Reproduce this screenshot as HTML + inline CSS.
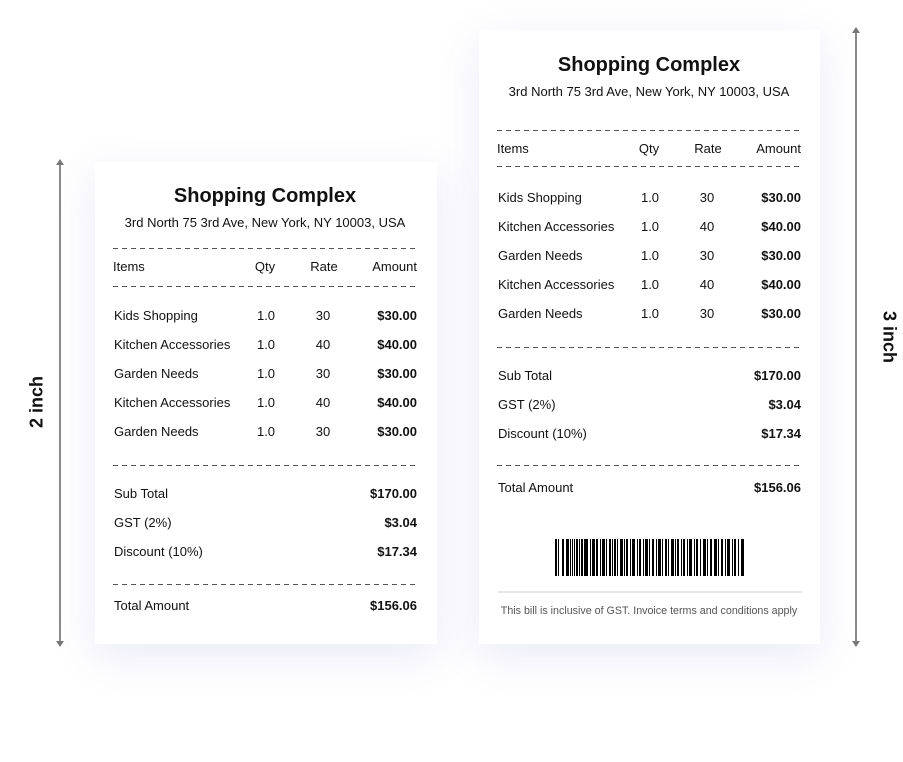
<!DOCTYPE html>
<html><head><meta charset="utf-8"><style>
*{margin:0;padding:0;box-sizing:border-box}
body{width:903px;height:762px;background:#fff;position:relative;overflow:hidden;font-family:"Liberation Sans",sans-serif;color:#111}
.card{position:absolute;background:#fff;box-shadow:0 12px 40px rgba(90,90,190,.13)}
.t{position:absolute;font-size:13px;line-height:16px;white-space:nowrap;margin-top:1px}
.c{transform:translateX(-50%)}
.r{transform:translateX(-100%)}
.b{font-weight:bold}
.h{font-size:20px;line-height:24px;font-weight:600}
.d{position:absolute;height:1.3px;background:repeating-linear-gradient(to right,#555 0 5px,transparent 5px 9px)}
.arrow{position:absolute;width:1.5px;background:#8a8a8a}
.lab{position:absolute;font-size:18px;font-weight:bold;white-space:nowrap}
</style></head><body>
<div class="card" style="left:95px;top:162px;width:342px;height:482px"></div>
<div class="card" style="left:479px;top:30px;width:341px;height:614px"></div>

<div class="arrow" style="left:59px;top:162px;height:482px"></div>
<div class="arrow" style="left:855px;top:30px;height:614px"></div>
<svg style="position:absolute;left:0;top:0" width="903" height="762">
<path d="M56 165 L60 159 L64 165Z M56 641 L60 647 L64 641Z M852 33 L856 27 L860 33Z M852 641 L856 647 L860 641Z" fill="#777"/>
</svg>
<div class="lab" style="left:37px;top:402px;transform:translate(-50%,-50%) rotate(-90deg)">2 inch</div>
<div class="lab" style="left:889px;top:337px;transform:translate(-50%,-50%) rotate(90deg)">3 inch</div>

<!-- left receipt -->
<div class="t h c" style="left:265px;top:183px">Shopping Complex</div>
<div class="t c" style="left:265px;top:214px">3rd North 75 3rd Ave, New York, NY 10003, USA</div>
<div class="d" style="left:113px;top:248px;width:305px"></div>
<div class="t" style="left:113px;top:258px">Items</div>
<div class="t c" style="left:265px;top:258px">Qty</div>
<div class="t c" style="left:324px;top:258px">Rate</div>
<div class="t r" style="left:417px;top:258px">Amount</div>
<div class="d" style="left:113px;top:286px;width:305px"></div>

<div class="t" style="left:114px;top:307px">Kids Shopping</div><div class="t c" style="left:266px;top:307px">1.0</div><div class="t c" style="left:323px;top:307px">30</div><div class="t r b" style="left:417px;top:307px">$30.00</div>
<div class="t" style="left:114px;top:336px">Kitchen Accessories</div><div class="t c" style="left:266px;top:336px">1.0</div><div class="t c" style="left:323px;top:336px">40</div><div class="t r b" style="left:417px;top:336px">$40.00</div>
<div class="t" style="left:114px;top:365px">Garden Needs</div><div class="t c" style="left:266px;top:365px">1.0</div><div class="t c" style="left:323px;top:365px">30</div><div class="t r b" style="left:417px;top:365px">$30.00</div>
<div class="t" style="left:114px;top:394px">Kitchen Accessories</div><div class="t c" style="left:266px;top:394px">1.0</div><div class="t c" style="left:323px;top:394px">40</div><div class="t r b" style="left:417px;top:394px">$40.00</div>
<div class="t" style="left:114px;top:423px">Garden Needs</div><div class="t c" style="left:266px;top:423px">1.0</div><div class="t c" style="left:323px;top:423px">30</div><div class="t r b" style="left:417px;top:423px">$30.00</div>
<div class="d" style="left:113px;top:465px;width:305px"></div>
<div class="t" style="left:114px;top:485px">Sub Total</div><div class="t r b" style="left:417px;top:485px">$170.00</div>
<div class="t" style="left:114px;top:514px">GST (2%)</div><div class="t r b" style="left:417px;top:514px">$3.04</div>
<div class="t" style="left:114px;top:543px">Discount (10%)</div><div class="t r b" style="left:417px;top:543px">$17.34</div>
<div class="d" style="left:113px;top:584px;width:305px"></div>
<div class="t" style="left:114px;top:597px">Total Amount</div><div class="t r b" style="left:417px;top:597px">$156.06</div>

<!-- right receipt -->
<div class="t h c" style="left:649px;top:52px">Shopping Complex</div>
<div class="t c" style="left:649px;top:83px">3rd North 75 3rd Ave, New York, NY 10003, USA</div>
<div class="d" style="left:497px;top:130px;width:305px"></div>
<div class="t" style="left:497px;top:140px">Items</div>
<div class="t c" style="left:649px;top:140px">Qty</div>
<div class="t c" style="left:708px;top:140px">Rate</div>
<div class="t r" style="left:801px;top:140px">Amount</div>
<div class="d" style="left:497px;top:166px;width:305px"></div>

<div class="t" style="left:498px;top:189px">Kids Shopping</div><div class="t c" style="left:650px;top:189px">1.0</div><div class="t c" style="left:707px;top:189px">30</div><div class="t r b" style="left:801px;top:189px">$30.00</div>
<div class="t" style="left:498px;top:218px">Kitchen Accessories</div><div class="t c" style="left:650px;top:218px">1.0</div><div class="t c" style="left:707px;top:218px">40</div><div class="t r b" style="left:801px;top:218px">$40.00</div>
<div class="t" style="left:498px;top:247px">Garden Needs</div><div class="t c" style="left:650px;top:247px">1.0</div><div class="t c" style="left:707px;top:247px">30</div><div class="t r b" style="left:801px;top:247px">$30.00</div>
<div class="t" style="left:498px;top:276px">Kitchen Accessories</div><div class="t c" style="left:650px;top:276px">1.0</div><div class="t c" style="left:707px;top:276px">40</div><div class="t r b" style="left:801px;top:276px">$40.00</div>
<div class="t" style="left:498px;top:305px">Garden Needs</div><div class="t c" style="left:650px;top:305px">1.0</div><div class="t c" style="left:707px;top:305px">30</div><div class="t r b" style="left:801px;top:305px">$30.00</div>
<div class="d" style="left:497px;top:347px;width:305px"></div>
<div class="t" style="left:498px;top:367px">Sub Total</div><div class="t r b" style="left:801px;top:367px">$170.00</div>
<div class="t" style="left:498px;top:396px">GST (2%)</div><div class="t r b" style="left:801px;top:396px">$3.04</div>
<div class="t" style="left:498px;top:425px">Discount (10%)</div><div class="t r b" style="left:801px;top:425px">$17.34</div>
<div class="d" style="left:497px;top:465px;width:305px"></div>
<div class="t" style="left:498px;top:479px">Total Amount</div><div class="t r b" style="left:801px;top:479px">$156.06</div>

<svg style="position:absolute;left:555px;top:539px" width="190" height="37" fill="#000">
<rect x="0" width="2" height="37"/><rect x="3" width="1" height="37"/><rect x="7" width="2" height="37"/><rect x="11" width="3" height="37"/><rect x="15" width="1" height="37"/><rect x="17" width="1" height="37"/><rect x="19" width="1" height="37"/><rect x="21" width="2" height="37"/><rect x="24" width="1" height="37"/><rect x="26" width="2" height="37"/><rect x="29" width="4" height="37"/><rect x="35" width="1" height="37"/><rect x="37" width="3" height="37"/><rect x="41" width="2" height="37"/><rect x="45" width="1" height="37"/><rect x="47" width="3" height="37"/><rect x="51" width="1" height="37"/><rect x="54" width="2" height="37"/><rect x="57" width="1" height="37"/><rect x="59" width="2" height="37"/><rect x="62" width="1" height="37"/><rect x="65" width="3" height="37"/><rect x="69" width="1" height="37"/><rect x="71" width="2" height="37"/><rect x="75" width="1" height="37"/><rect x="77" width="3" height="37"/><rect x="82" width="1" height="37"/><rect x="84" width="2" height="37"/><rect x="88" width="1" height="37"/><rect x="90" width="3" height="37"/><rect x="94" width="1" height="37"/><rect x="97" width="2" height="37"/><rect x="101" width="1" height="37"/><rect x="103" width="3" height="37"/><rect x="107" width="1" height="37"/><rect x="110" width="2" height="37"/><rect x="113" width="1" height="37"/><rect x="116" width="3" height="37"/><rect x="120" width="1" height="37"/><rect x="122" width="2" height="37"/><rect x="126" width="1" height="37"/><rect x="128" width="2" height="37"/><rect x="132" width="1" height="37"/><rect x="134" width="3" height="37"/><rect x="139" width="1" height="37"/><rect x="141" width="2" height="37"/><rect x="145" width="1" height="37"/><rect x="148" width="3" height="37"/><rect x="152" width="1" height="37"/><rect x="155" width="2" height="37"/><rect x="159" width="3" height="37"/><rect x="163" width="1" height="37"/><rect x="166" width="2" height="37"/><rect x="170" width="1" height="37"/><rect x="172" width="3" height="37"/><rect x="177" width="1" height="37"/><rect x="179" width="2" height="37"/><rect x="183" width="1" height="37"/><rect x="186" width="3" height="37"/>
</svg>
<div style="position:absolute;left:498px;top:591px;width:304px;height:1.5px;background:#e6e6e6"></div>
<div class="t c" style="left:649px;top:602px;font-size:10.7px;color:#555">This bill is inclusive of GST. Invoice terms and conditions apply</div>
</body></html>
